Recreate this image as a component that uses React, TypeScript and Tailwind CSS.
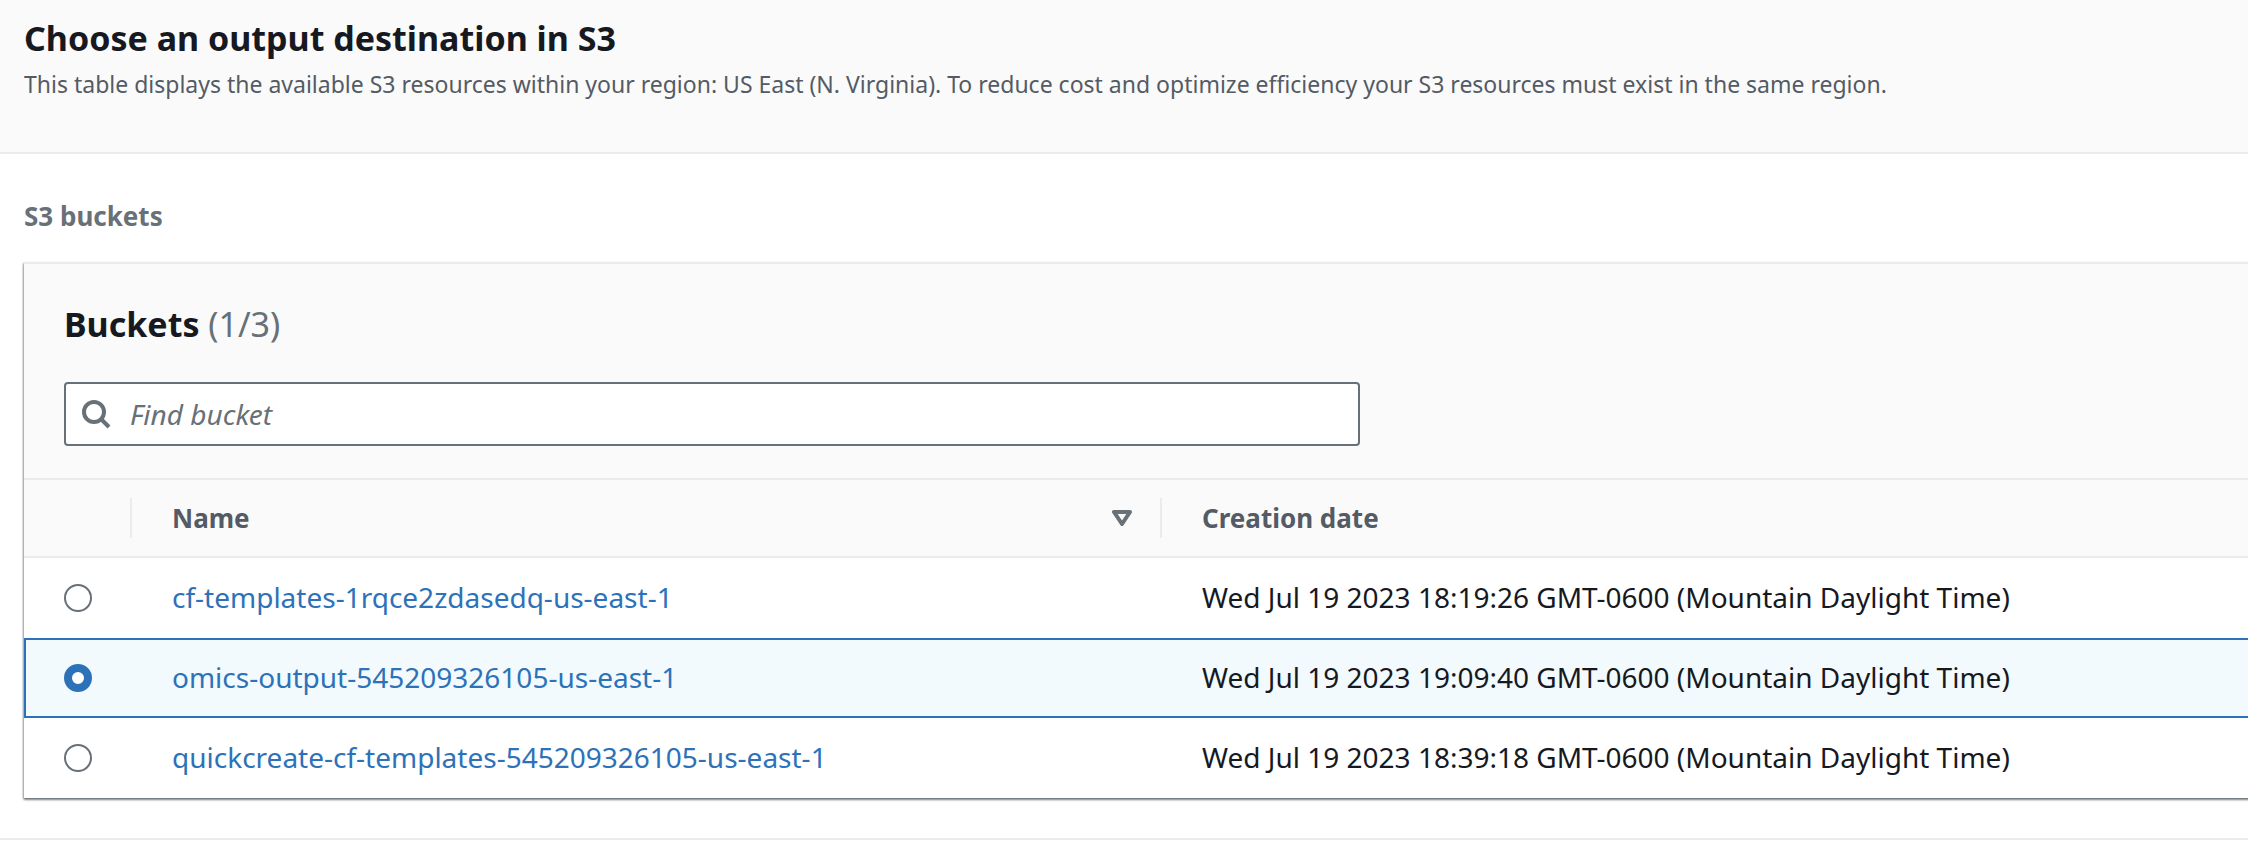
import { useState } from "react";

type Bucket = { name: string; created: string };

const buckets: Bucket[] = [
  { name: "cf-templates-1rqce2zdasedq-us-east-1", created: "Wed Jul 19 2023 18:19:26 GMT-0600 (Mountain Daylight Time)" },
  { name: "omics-output-545209326105-us-east-1", created: "Wed Jul 19 2023 19:09:40 GMT-0600 (Mountain Daylight Time)" },
  { name: "quickcreate-cf-templates-545209326105-us-east-1", created: "Wed Jul 19 2023 18:39:18 GMT-0600 (Mountain Daylight Time)" },
];

function SearchIcon() {
  return (
    <svg className="size-8 shrink-0" viewBox="0 0 32 32" fill="none" stroke="#687078" strokeWidth="4" aria-hidden="true">
      <circle cx="14" cy="14" r="10" />
      <path d="M21 21l8 8" />
    </svg>
  );
}

function SortIcon() {
  return (
    <svg className="block h-4 w-5" viewBox="0 0 20 16" fill="none" stroke="#687078" strokeWidth="4" strokeLinejoin="round" aria-hidden="true">
      <path d="M2 2h16l-8 12z" />
    </svg>
  );
}

function BucketRow({ bucket, selected, onSelect }: { bucket: Bucket; selected: boolean; onSelect: () => void }) {
  const cell = selected ? "border-y-2 border-[#2d72b8] bg-[#f2fafd]" : "border-y-2 border-transparent";
  return (
    <tr className="h-20">
      <td className={`${cell} ${selected ? "border-l-2 pl-[38px]" : "pl-10"}`}>
        <input
          type="radio"
          name="bucket"
          aria-label={bucket.name}
          checked={selected}
          onChange={onSelect}
          className="block size-7 appearance-none rounded-full border-2 border-[#687078] bg-white checked:border-8 checked:border-[#2d72b8]"
        />
      </td>
      <td className={`${cell} pb-0.5 pl-10`}>
        <a href="#" className="text-[#2d72b8]">{bucket.name}</a>
      </td>
      <td className={`${cell} pb-0.5 pl-10 whitespace-nowrap`}>{bucket.created}</td>
    </tr>
  );
}

export default function App() {
  const [selected, setSelected] = useState(1);
  return (
    <main className="min-h-screen overflow-x-hidden bg-white font-['Noto_Sans',sans-serif] text-[28px] leading-10 text-[#16191f]">
      <header className="border-b-2 border-[#eaeded] bg-[#fafafa] px-6 pt-4 pb-12">
        <h1 className="text-[34px] leading-[44px] font-bold">Choose an output destination in S3</h1>
        <p className="pt-1 text-[23px] leading-10 text-[#545b64]">
          This table displays the available S3 resources within your region: US East (N. Virginia). To reduce cost and
          optimize efficiency your S3 resources must exist in the same region.
        </p>
      </header>

      <section className="border-b-2 border-[#eaeded] pt-[42px] pb-10 pl-6">
        <h2 className="text-[26px] leading-10 font-bold text-[#687078]">S3 buckets</h2>
        <div className="mt-[26px] -mr-2 border-t-2 border-[#ebebeb] shadow-[0_2px_2px_0_#00141a73,-1px_1px_2px_0_#00141a4d]">
          <div className="bg-[#fafafa] px-10 pt-10 pb-8">
            <h3 className="text-[34px] leading-10 font-bold">
              Buckets <span className="font-normal text-[#687078]">(1/3)</span>
            </h3>
            <label className="mt-[38px] flex h-16 max-w-[1296px] items-center gap-[18px] rounded border-2 border-[#687078] bg-white px-3.5">
              <SearchIcon />
              <input
                type="search"
                aria-label="Find bucket"
                placeholder="Find bucket"
                className="min-w-0 grow bg-transparent outline-none placeholder:text-[#687078] placeholder:italic"
              />
            </label>
          </div>

          <table className="w-full table-fixed border-separate border-spacing-0 bg-white">
            <colgroup>
              <col className="w-[108px]" />
              <col className="w-[1030px]" />
              <col />
            </colgroup>
            <thead>
              <tr className="h-20 bg-[#fafafa] text-left text-[26px] text-[#545b64]">
                <th aria-label="Selection" className="border-y-2 border-[#ebebeb]">
                  <div className="h-10 border-r-2 border-[#ebebeb]" />
                </th>
                <th className="border-y-2 border-[#ebebeb] pl-10">
                  <div className="flex h-10 items-center justify-between border-r-2 border-[#ebebeb] pr-7">
                    Name
                    <button type="button" aria-label="Sort by name"><SortIcon /></button>
                  </div>
                </th>
                <th className="border-y-2 border-[#ebebeb] pl-10">Creation date</th>
              </tr>
            </thead>
            <tbody>
              {buckets.map((bucket, i) => (
                <BucketRow key={bucket.name} bucket={bucket} selected={i === selected} onSelect={() => setSelected(i)} />
              ))}
            </tbody>
          </table>
        </div>
      </section>
    </main>
  );
}
